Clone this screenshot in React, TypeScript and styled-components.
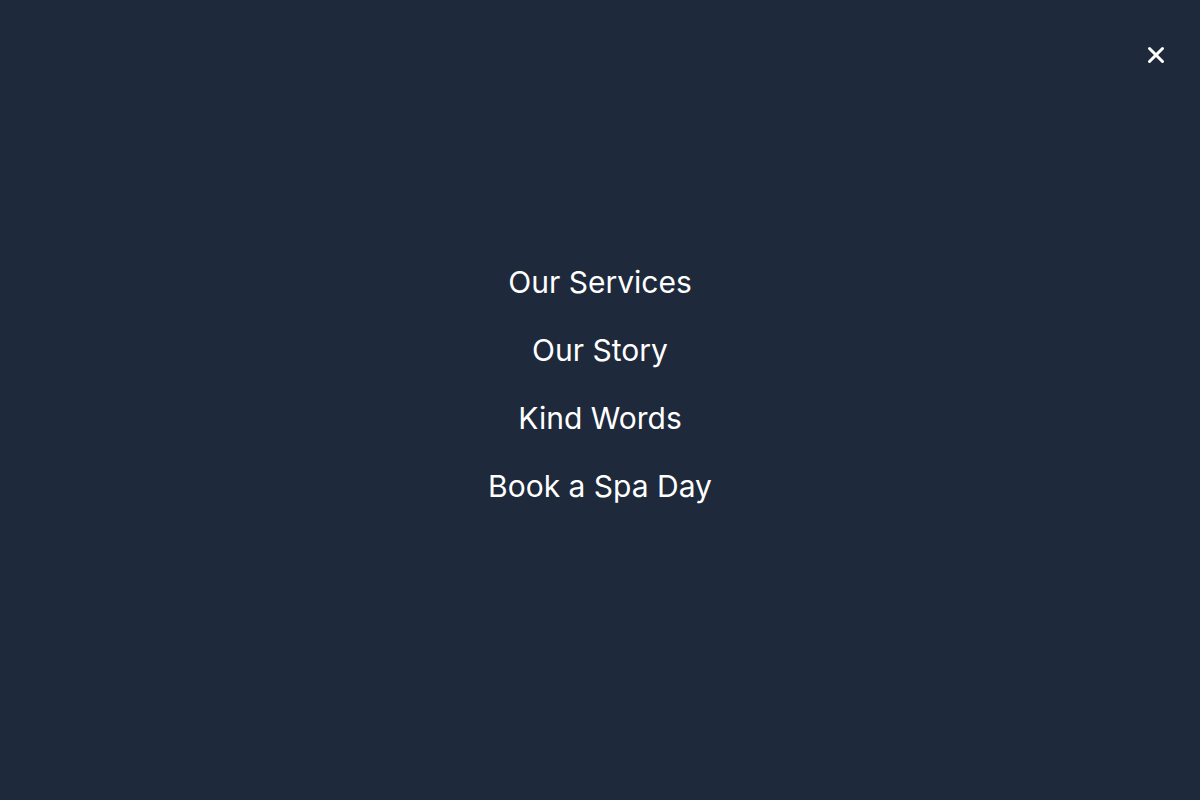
import React from 'react';
import styled, { createGlobalStyle } from 'styled-components';

const GlobalStyle = createGlobalStyle`
	html, body {
		margin: 0;
		padding: 0;
		background: #1e293b;
	}
	body {
		font-family: Inter, "Noto Sans", "Liberation Sans", sans-serif;
	}
`;

const links = ['Our Services', 'Our Story', 'Kind Words', 'Book a Spa Day'];

const App = () => {
	return (
		<>
			<GlobalStyle />
			<Overlay>
				<CloseButton aria-label="Close menu">
					<svg width="24" height="24" viewBox="0 0 24 24" fill="none" stroke="currentColor" strokeWidth="3" strokeLinecap="round">
						<path d="M18.5 5.5 5.5 18.5" />
						<path d="M5.5 5.5 18.5 18.5" />
					</svg>
				</CloseButton>
				<Nav>
					{links.map((link) => (
						<NavLink key={link} href="#">
							{link}
						</NavLink>
					))}
				</Nav>
			</Overlay>
		</>
	);
};

export default App;

const Overlay = styled.div`
	position: relative;
	width: 100%;
	height: 100vh;
	background: #1e293b;
	display: flex;
	align-items: center;
	justify-content: center;
	padding-bottom: 32px;
	box-sizing: border-box;
`;

const CloseButton = styled.button`
	position: absolute;
	top: 43px;
	right: 32px;
	width: 24px;
	height: 24px;
	padding: 0;
	border: none;
	background: transparent;
	color: #ffffff;
	display: flex;
	align-items: center;
	justify-content: center;
	cursor: pointer;
`;

const Nav = styled.nav`
	display: flex;
	flex-direction: column;
	align-items: center;
	gap: 32px;
`;

const NavLink = styled.a`
	font-size: 30px;
	line-height: 36px;
	font-weight: 400;
	color: #ffffff;
	text-decoration: none;
`;
